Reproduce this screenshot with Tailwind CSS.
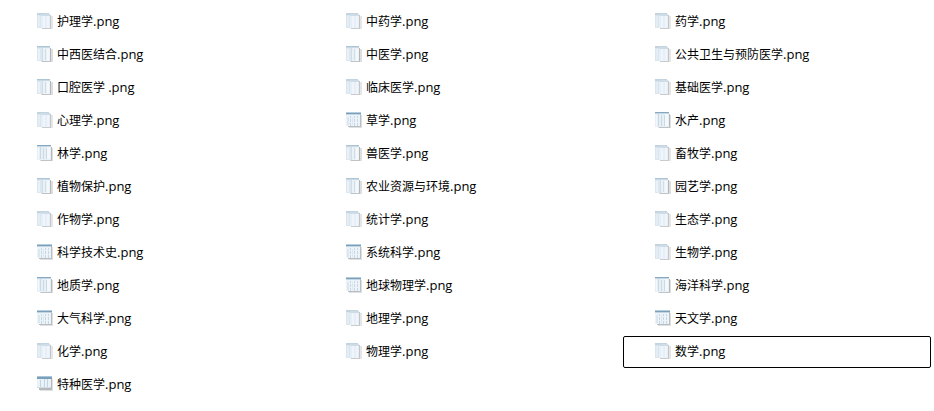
<!DOCTYPE html>
<html lang="zh-CN">

<head>
  <meta charset="UTF-8">
  <meta name="viewport" content="width=device-width, initial-scale=1.0">
  <title>png</title>
  <script src="https://cdn.jsdelivr.net/npm/@tailwindcss/browser@4"></script>
</head>

<body class="bg-white text-black font-['Open_Sans','Noto_Sans_CJK_SC',sans-serif]">
  <!-- thumbnail icons -->
  <svg class="hidden">
    <symbol id="pages" viewBox="0 0 18 18">
      <path fill="#e6e6e6" d="M14 4h2v13H5v-1h9z" />
      <path fill="#d9e6ee" d="M0 1h12v15H0z" />
      <path fill="#c3d4de" d="M0 1h12v2H0z" />
      <path fill="#e3edf3" d="M1 4h2v11H1z" />
      <path fill="#e6eef7" d="M4 2h9v14H4z" />
      <path fill="#cddce6" d="M4 2h9v2H4z" />
      <path fill="#eff5fb" d="M6 4h2v12H6zM10 4h2v12h-2z" />
      <path fill="#c2c6c9" d="M13 3h1v13h-1z" />
      <path fill="#c9cccf" d="M5 16h9v1H5z" />
    </symbol>
    <symbol id="stack" viewBox="0 0 18 18">
      <path fill="#dedede" d="M14 4h2v13H4v-1h10z" />
      <path fill="#dce7ef" d="M0 1h13v15H0z" />
      <path fill="#adc5d5" d="M0 1h13v1H0z" />
      <path fill="#c8d9e4" d="M0 2h13v1H0z" />
      <path fill="#eaf2f8" d="M1 4h2v11H1zM5 3h8v13H5z" />
      <path fill="#cfdde7" d="M5 3h1v13H5zM8 4h1v11H8z" />
      <path fill="#f3f8fb" d="M10 4h2v12h-2z" />
      <path fill="#b3b7ba" d="M13 3h1v13h-1z" />
      <path fill="#c0c4c7" d="M5 16h9v1H5z" />
    </symbol>
    <symbol id="sheet" viewBox="0 0 18 18">
      <path fill="#dfdfdf" d="M14 4h2v13H3v-1h11z" />
      <path fill="#e7f0f7" d="M0 1h14v15H0z" />
      <path fill="#86a8c1" d="M0 1h14v1H0z" />
      <path fill="#c5d7e4" d="M0 2h14v1H0z" />
      <path fill="#cad9e4" d="M3 3h1v12H3zM6 4h1v11H6zM9 4h1v11H9z" />
      <path fill="#f4f8fb" d="M1 4h1v11H1zM10 3h3v12h-3z" />
      <path fill="#b3b8bc" d="M14 3h1v13h-1z" />
      <path fill="#bec3c6" d="M4 16h11v1H4z" />
    </symbol>
    <symbol id="table" viewBox="0 0 18 18">
      <path fill="#e0e0e0" d="M15 4h1v12h-1zM3 16h13v1H3z" />
      <path fill="#edf4f9" d="M0 1h15v14H0z" />
      <path fill="#b9cedd" d="M0 1h15v1H0z" />
      <path fill="#7a9fba" d="M0 2h15v1H0z" />
      <path fill="#c3d6e3" d="M0 3h15v1H0z" />
      <path fill="#c7d8e4" d="M4 5h1v10H4zM8 5h1v10H8zM11 5h1v10h-1z" />
      <path fill="#dce7ef" d="M1 6h2v8H1zM6 6h1v8H6z" />
      <path fill="#e9f1f7" d="M4 7h1v1H4zM8 7h1v1H8zM11 7h1v1h-1zM4 11h1v1H4zM8 11h1v1H8zM11 11h1v1h-1z" />
      <path fill="#b8bec3" d="M14 3h1v12h-1zM2 15h13v1H2z" />
    </symbol>
    <symbol id="report" viewBox="0 0 18 18">
      <path fill="#e2e2e2" d="M15 4h1v12H3v-1h12z" />
      <path fill="#eaf2f8" d="M0 1h15v12H0z" />
      <path fill="#adc5d8" d="M0 1h15v1H0z" />
      <path fill="#7a9fba" d="M0 2h15v2H0z" />
      <path fill="#c2d4e2" d="M3 5h1v7H3zM7 4h1v8H7zM10 4h1v8h-1z" />
      <path fill="#d2dfe9" d="M0 12h15v1H0z" />
      <path fill="#b5b9bc" d="M2 13h13v2H2zM14 4h1v9h-1z" />
    </symbol>
  </svg>

  <ul id="files" class="grid grid-cols-3 gap-px pt-1.5 pl-[5px] pr-[3px]"></ul>
</body>
<script>
  // [name, icon]
  const files = [
    ['护理学', 'pages'], ['中药学', 'pages'], ['药学', 'pages'],
    ['中西医结合', 'stack'], ['中医学', 'stack'], ['公共卫生与预防医学', 'pages'],
    ['口腔医学 ', 'stack'], ['临床医学', 'pages'], ['基础医学', 'pages'],
    ['心理学', 'pages'], ['草学', 'table'], ['水产', 'sheet'],
    ['林学', 'sheet'], ['兽医学', 'stack'], ['畜牧学', 'pages'],
    ['植物保护', 'stack'], ['农业资源与环境', 'stack'], ['园艺学', 'stack'],
    ['作物学', 'pages'], ['统计学', 'pages'], ['生态学', 'pages'],
    ['科学技术史', 'table'], ['系统科学', 'table'], ['生物学', 'pages'],
    ['地质学', 'sheet'], ['地球物理学', 'table'], ['海洋科学', 'sheet'],
    ['大气科学', 'table'], ['地理学', 'pages'], ['天文学', 'table'],
    ['化学', 'pages'], ['物理学', 'pages'], ['数学', 'pages'],
    ['特种医学', 'report'],
  ];
  const selected = '数学';

  document.getElementById('files').innerHTML = files.map(([name, icon]) => `
    <li class="flex h-8 items-center gap-0.5 rounded-xs border pl-[31px] pb-0.5 ${name === selected ? 'border-black' : 'border-transparent'}">
      <svg class="size-[18px] shrink-0" shape-rendering="crispEdges"><use href="#${icon}" /></svg>
      <span class="whitespace-pre text-[12px] leading-4">${name}<span class="text-[13px]">.png</span></span>
    </li>`).join('');
</script>

</html>
